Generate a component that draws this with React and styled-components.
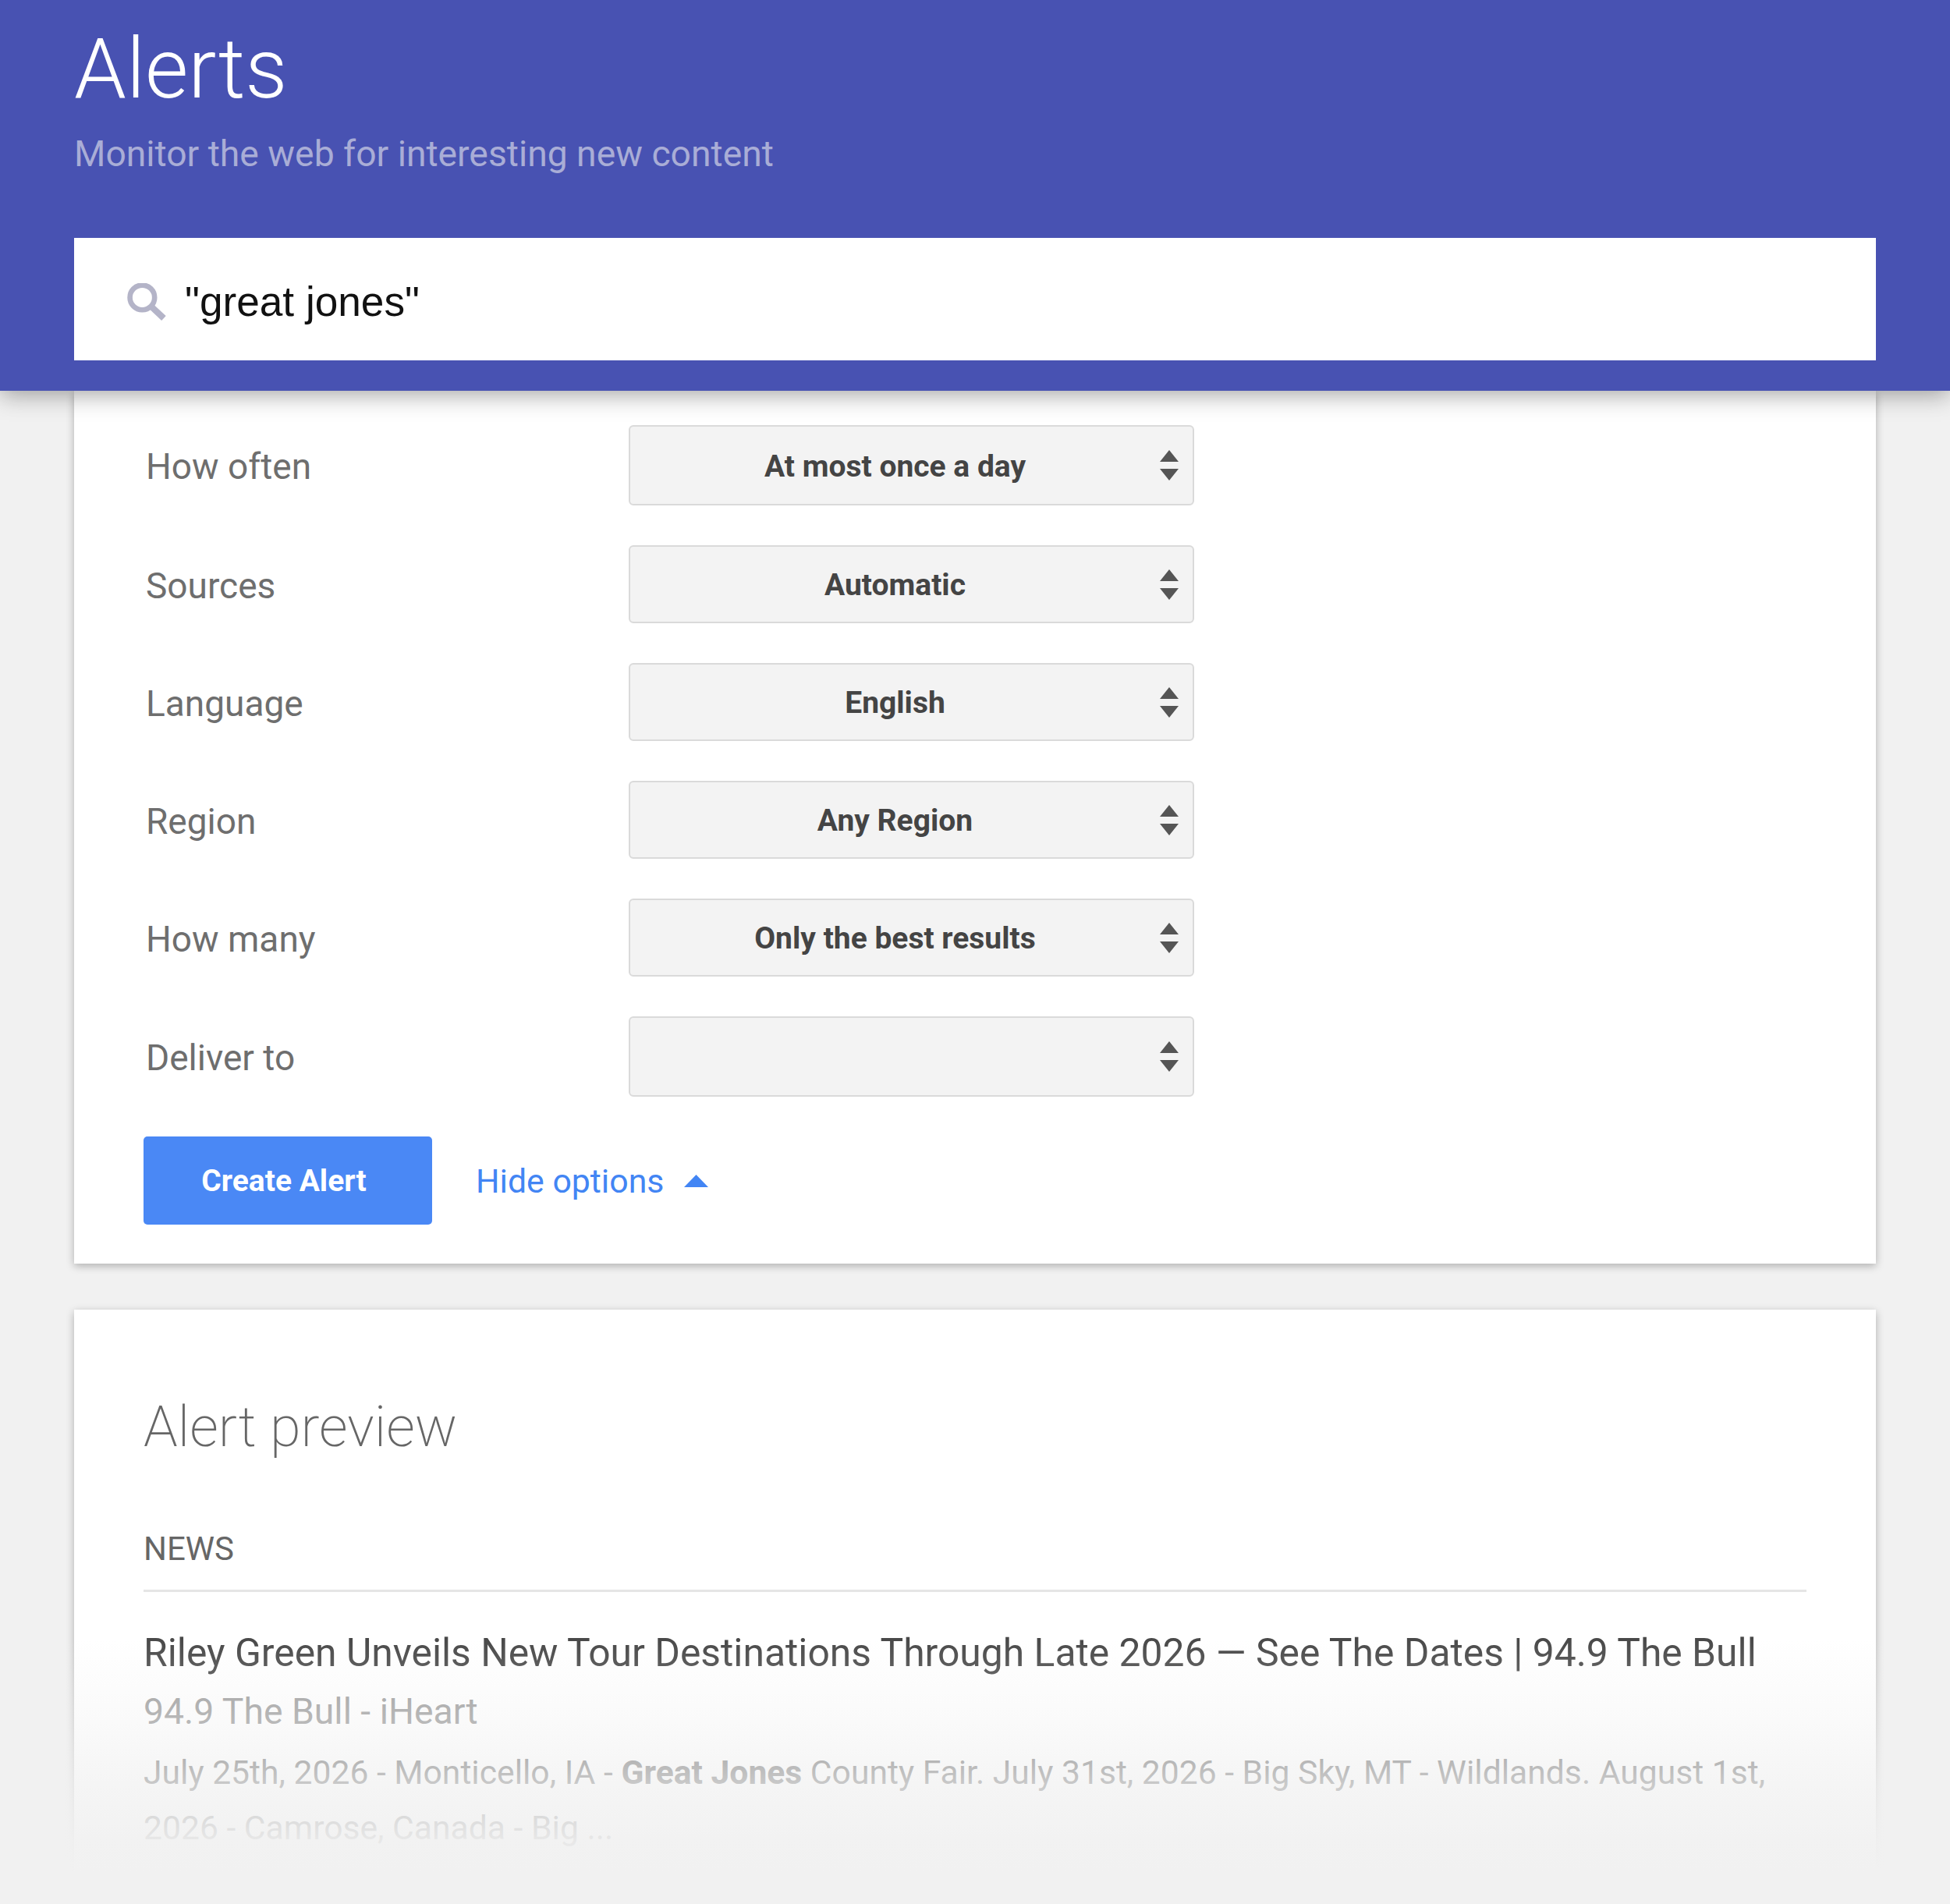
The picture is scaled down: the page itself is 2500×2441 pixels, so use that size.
import React from "react";
import styled, { createGlobalStyle } from "styled-components";

const GlobalStyle = createGlobalStyle`
  html, body {
    margin: 0;
    padding: 0;
    background: #f1f1f1;
    font-family: Roboto, "Liberation Sans", sans-serif;
  }
`;

const options = [
  { label: "How often", value: "At most once a day", tall: true },
  { label: "Sources", value: "Automatic" },
  { label: "Language", value: "English" },
  { label: "Region", value: "Any Region" },
  { label: "How many", value: "Only the best results" },
  { label: "Deliver to", value: "", tall: true },
];

const SearchIcon = () => (
  <SearchGlyph viewBox="0 0 50 47">
    <circle cx="19" cy="18" r="15.5" fill="none" stroke="#b4b4c8" strokeWidth="6.5" />
    <path d="M31 30 L46 44" fill="none" stroke="#b4b4c8" strokeWidth="8" />
  </SearchGlyph>
);

const UpDownArrows = () => (
  <ArrowGlyph viewBox="0 0 24 39">
    <path d="M12 0 L24 15 H0 Z" fill="#555" />
    <path d="M0 24 H24 L12 39 Z" fill="#555" />
  </ArrowGlyph>
);

export default function App() {
  return (
    <Page>
      <GlobalStyle />
      <Header>
        <Title>Alerts</Title>
        <Subtitle>Monitor the web for interesting new content</Subtitle>
        <SearchBox>
          <SearchIcon />
          <SearchText>"great jones"</SearchText>
        </SearchBox>
      </Header>

      <Main>
        <OptionsCard>
          <OptionRows>
            {options.map((option) => (
              <OptionRow key={option.label}>
                <OptionLabel>{option.label}</OptionLabel>
                <Select $tall={option.tall}>
                  <SelectValue>{option.value}</SelectValue>
                  <UpDownArrows />
                </Select>
              </OptionRow>
            ))}
          </OptionRows>
          <Actions>
            <CreateButton>Create Alert</CreateButton>
            <HideLink>
              Hide options
              <HideArrow viewBox="0 0 31 16">
                <path d="M15.5 0 L31 16 H0 Z" fill="#4285f4" />
              </HideArrow>
            </HideLink>
          </Actions>
        </OptionsCard>

        <PreviewCard>
          <PreviewTitle>Alert preview</PreviewTitle>
          <SectionName>NEWS</SectionName>
          <ResultTitle>
            Riley Green Unveils New Tour Destinations Through Late 2026 — See The Dates | 94.9 The Bull
          </ResultTitle>
          <ResultSource>94.9 The Bull - iHeart</ResultSource>
          <ResultSnippet>
            July 25th, 2026 - Monticello, IA - <b>Great Jones</b> County Fair. July 31st, 2026 - Big
            Sky, MT - Wildlands. August 1st, 2026 - Camrose, Canada - Big ...
          </ResultSnippet>
        </PreviewCard>
      </Main>
      <BottomFade />
    </Page>
  );
}

const Page = styled.div`
  position: relative;
  height: 2441px;
  overflow: hidden;
  background: #f1f1f1;
`;

const Header = styled.header`
  position: relative;
  z-index: 2;
  box-sizing: border-box;
  height: 501px;
  padding: 35px 95px 0;
  background: #4852b2;
  box-shadow: 0 4px 30px rgba(0, 0, 0, 0.38);
`;

const Title = styled.h1`
  margin: 0;
  font-size: 107px;
  line-height: 107px;
  font-weight: 300;
  color: #fff;
`;

const Subtitle = styled.div`
  margin-top: 25px;
  font-size: 46.25px;
  line-height: 60px;
  font-weight: 400;
  color: #a9add6;
`;

const SearchBox = styled.div`
  box-sizing: border-box;
  display: flex;
  align-items: center;
  gap: 24px;
  height: 157px;
  margin-top: 78px;
  padding: 7px 0 0 68px;
  background: #fff;
`;

const SearchGlyph = styled.svg`
  width: 51px;
  height: 48px;
  flex: none;
`;

const SearchText = styled.div`
  margin-left: -1px;
  font-family: "Liberation Sans", Arial, sans-serif;
  font-size: 53.2px;
  line-height: 60px;
  color: #111;
`;

const Main = styled.main`
  padding: 0 95px;
`;

const Card = styled.section`
  box-sizing: border-box;
  background: #fff;
  box-shadow: 0 3px 10px rgba(0, 0, 0, 0.28);
`;

const OptionsCard = styled(Card)`
  height: 1119px;
  padding: 44px 89px 0;
`;

const OptionRows = styled.div`
  display: flex;
  flex-direction: column;
  gap: 51px;
`;

const OptionRow = styled.div`
  display: flex;
  align-items: center;
`;

const OptionLabel = styled.div`
  box-sizing: border-box;
  width: 622px;
  padding: 3px 0 0 3px;
  font-size: 46px;
  font-weight: 400;
  color: #6e6e6e;
`;

const Select = styled.div`
  box-sizing: border-box;
  display: flex;
  align-items: center;
  width: 725px;
  height: ${(props) => (props.$tall ? "103px" : "100px")};
  padding-right: 18px;
  background: #f3f3f3;
  border: 2px solid #dadada;
  border-radius: 6px;
`;

const SelectValue = styled.div`
  flex: 1;
  padding-top: 2px;
  text-align: center;
  font-size: 39px;
  font-weight: 700;
  color: #444;
`;

const ArrowGlyph = styled.svg`
  width: 24px;
  height: 39px;
  flex: none;
`;

const Actions = styled.div`
  display: flex;
  align-items: center;
  gap: 56px;
  margin-top: 51px;
`;

const CreateButton = styled.button`
  box-sizing: border-box;
  width: 370px;
  height: 113px;
  padding: 0 10px 0 0;
  border: none;
  border-radius: 5px;
  background: #4a88f5;
  font-family: Roboto, sans-serif;
  font-size: 39px;
  font-weight: 700;
  color: #fff;
`;

const HideLink = styled.div`
  display: flex;
  align-items: center;
  gap: 26px;
  font-size: 42.8px;
  font-weight: 400;
  color: #4285f4;
`;

const HideArrow = styled.svg`
  width: 31px;
  height: 16px;
`;

const PreviewCard = styled(Card)`
  height: 760px;
  margin-top: 59px;
  padding: 111px 89px 0;
`;

const PreviewTitle = styled.h2`
  margin: 0;
  font-size: 72px;
  line-height: 80px;
  font-weight: 200;
  color: #666;
`;

const SectionName = styled.div`
  margin-top: 92px;
  padding-bottom: 28px;
  border-bottom: 3px solid #e5e5e5;
  font-size: 42px;
  line-height: 48px;
  font-weight: 400;
  color: #666;
`;

const ResultTitle = styled.div`
  margin-top: 46px;
  font-size: 49.8px;
  line-height: 64px;
  font-weight: 400;
  color: #484848;
`;

const ResultSource = styled.div`
  margin-top: 11px;
  font-size: 46.3px;
  line-height: 64px;
  font-weight: 400;
  color: #999;
`;

const ResultSnippet = styled.div`
  margin-top: 11px;
  font-size: 42.65px;
  line-height: 71px;
  font-weight: 400;
  color: #666;

  b {
    font-weight: 700;
  }
`;

const BottomFade = styled.div`
  position: absolute;
  left: 0;
  right: 0;
  top: 2100px;
  bottom: 0;
  z-index: 1;
  background: linear-gradient(
    to bottom,
    rgba(241, 241, 241, 0) 0,
    rgba(241, 241, 241, 0.36) 109px,
    rgba(241, 241, 241, 0.71) 187px,
    rgba(241, 241, 241, 0.93) 258px,
    #f1f1f1 300px
  );
`;
